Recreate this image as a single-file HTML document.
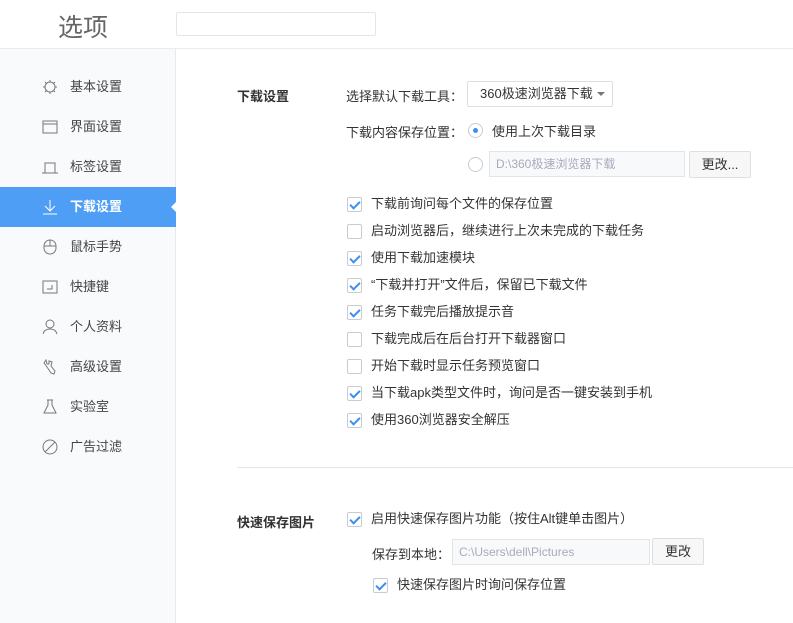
<!DOCTYPE html><html><head><meta charset="utf-8"><style>
*{margin:0;padding:0;box-sizing:border-box}
body{width:793px;height:623px;overflow:hidden;background:#fff;font-family:"Liberation Sans","Noto Sans CJK SC",sans-serif;font-size:13px;color:#333;position:relative}
.a{position:absolute;white-space:nowrap}
.hdr{left:0;top:0;width:793px;height:49px;border-bottom:1px solid #e8ebef}
.side{left:0;top:49px;width:176px;height:574px;background:#f8fafc;border-right:1px solid #e6e9ee}
.nav{left:0;width:176px;height:40px;line-height:40px;padding-left:70px;color:#444;font-size:13px}
.nav svg{position:absolute;left:42px;top:12px}
.act{background:#4f9ef6;color:#fff;font-weight:bold}
.cb{width:15px;height:15px;border:1px solid #c8ccd2;border-radius:2px;background:#fff}
.cb.on::after{content:"";position:absolute;left:4px;top:1px;width:4px;height:8px;border:solid #3d8ff0;border-width:0 2px 2px 0;transform:rotate(45deg)}
.lb{line-height:16px}
.btn{border:1px solid #dcdfe3;background:#f7f7f7;border-radius:2px;text-align:center;color:#333}
.inp{border:1px solid #e1e5ea;background:#f7f9fb;color:#aab;padding-left:6px;font-size:12px}
.rd{width:15px;height:15px;border:1px solid #c8ccd2;border-radius:50%;background:#fff}
</style></head><body>
<div class="a hdr"></div>
<div class="a" style="left:58px;top:8px;font-size:25px;color:#666">选项</div>
<div class="a" style="left:176px;top:12px;width:200px;height:24px;border:1px solid #e3e5e8;border-radius:2px"></div>
<div class="a side"></div>
<div class="a nav" style="top:67px"><svg width="16" height="16" viewBox="0 0 16 16" fill="none" stroke="#777"><circle cx="8" cy="8" r="5"/><path d="M8 1v2M8 13v2M1 8h2M13 8h2M3 3l1.5 1.5M11.5 11.5L13 13M3 13l1.5-1.5M11.5 4.5L13 3"/></svg>基本设置</div>
<div class="a nav" style="top:107px"><svg width="16" height="16" viewBox="0 0 16 16" fill="none" stroke="#777"><rect x="1" y="2" width="14" height="12"/><path d="M1 5h14"/></svg>界面设置</div>
<div class="a nav" style="top:147px"><svg width="16" height="16" viewBox="0 0 16 16" fill="none" stroke="#777"><path d="M3 14V4h10v10M0 14h16"/></svg>标签设置</div>
<div class="a nav act" style="top:187px"><svg width="16" height="16" viewBox="0 0 16 16" fill="none" stroke="#fff"><path d="M8 1v11M3 7l5 5 5-5M1 15h14"/></svg>下载设置</div>
<div class="a" style="left:171px;top:200px;width:0;height:0;border:7px solid transparent;border-right-color:#fff;border-left:0"></div>
<div class="a nav" style="top:227px"><svg width="16" height="16" viewBox="0 0 16 16" fill="none" stroke="#777"><rect x="2" y="1" width="12" height="14" rx="6"/><path d="M2 7h12M8 1v6"/></svg>鼠标手势</div>
<div class="a nav" style="top:267px"><svg width="16" height="16" viewBox="0 0 16 16" fill="none" stroke="#777"><rect x="1" y="2" width="14" height="12"/><path d="M10 6v4H5"/></svg>快捷键</div>
<div class="a nav" style="top:307px"><svg width="16" height="16" viewBox="0 0 16 16" fill="none" stroke="#777"><circle cx="8" cy="5" r="4"/><path d="M1 15c1-4 4-5 7-5s6 1 7 5"/></svg>个人资料</div>
<div class="a nav" style="top:347px"><svg width="16" height="16" viewBox="0 0 16 16" fill="none" stroke="#777"><path d="M4 1L2 4l3 4 4 6 3 1 1-3-4-5 1-4-3-1 0 3-2 0z"/></svg>高级设置</div>
<div class="a nav" style="top:387px"><svg width="16" height="16" viewBox="0 0 16 16" fill="none" stroke="#777"><path d="M5 1h6M6 1v5L2 14h12L10 6V1"/></svg>实验室</div>
<div class="a nav" style="top:427px"><svg width="16" height="16" viewBox="0 0 16 16" fill="none" stroke="#777"><circle cx="8" cy="8" r="7"/><path d="M3 13L13 3"/></svg>广告过滤</div>

<div class="a" style="left:237px;top:86px;font-weight:bold">下载设置</div>
<div class="a" style="left:346px;top:86px">选择默认下载工具：</div>
<div class="a btn" style="left:467px;top:81px;width:146px;height:26px;line-height:24px;text-align:left;padding-left:12px;background:#fff">360极速浏览器下载<span style="position:absolute;right:7px;top:10px;border:4px solid transparent;border-top-color:#777;border-bottom:0"></span></div>
<div class="a" style="left:346px;top:122px">下载内容保存位置：</div>
<div class="a rd" style="left:468px;top:123px"><div style="position:absolute;left:4px;top:4px;width:5px;height:5px;border-radius:50%;background:#3d8ff0"></div></div>
<div class="a" style="left:492px;top:121px">使用上次下载目录</div>
<div class="a rd" style="left:468px;top:157px"></div>
<div class="a inp" style="left:489px;top:151px;width:196px;height:26px;line-height:24px">D:\360极速浏览器下载</div>
<div class="a btn" style="left:689px;top:151px;width:62px;height:27px;line-height:25px">更改...</div>

<div class="a cb on" style="left:347px;top:197px"></div><div class="a lb" style="left:371px;top:196px">下载前询问每个文件的保存位置</div>
<div class="a cb" style="left:347px;top:224px"></div><div class="a lb" style="left:371px;top:223px">启动浏览器后，继续进行上次未完成的下载任务</div>
<div class="a cb on" style="left:347px;top:251px"></div><div class="a lb" style="left:371px;top:250px">使用下载加速模块</div>
<div class="a cb on" style="left:347px;top:278px"></div><div class="a lb" style="left:371px;top:277px">“下载并打开”文件后，保留已下载文件</div>
<div class="a cb on" style="left:347px;top:305px"></div><div class="a lb" style="left:371px;top:304px">任务下载完后播放提示音</div>
<div class="a cb" style="left:347px;top:332px"></div><div class="a lb" style="left:371px;top:331px">下载完成后在后台打开下载器窗口</div>
<div class="a cb" style="left:347px;top:359px"></div><div class="a lb" style="left:371px;top:358px">开始下载时显示任务预览窗口</div>
<div class="a cb on" style="left:347px;top:386px"></div><div class="a lb" style="left:371px;top:385px">当下载apk类型文件时，询问是否一键安装到手机</div>
<div class="a cb on" style="left:347px;top:413px"></div><div class="a lb" style="left:371px;top:412px">使用360浏览器安全解压</div>

<div class="a" style="left:237px;top:467px;width:556px;height:1px;background:#e3e6ea"></div>

<div class="a" style="left:237px;top:512px;font-weight:bold">快速保存图片</div>
<div class="a cb on" style="left:347px;top:512px"></div><div class="a lb" style="left:371px;top:511px">启用快速保存图片功能（按住Alt键单击图片）</div>
<div class="a" style="left:372px;top:544px">保存到本地：</div>
<div class="a inp" style="left:452px;top:539px;width:198px;height:26px;line-height:24px">C:\Users\dell\Pictures</div>
<div class="a btn" style="left:652px;top:538px;width:52px;height:27px;line-height:25px">更改</div>
<div class="a cb on" style="left:373px;top:578px"></div><div class="a lb" style="left:397px;top:577px">快速保存图片时询问保存位置</div>
</body></html>
